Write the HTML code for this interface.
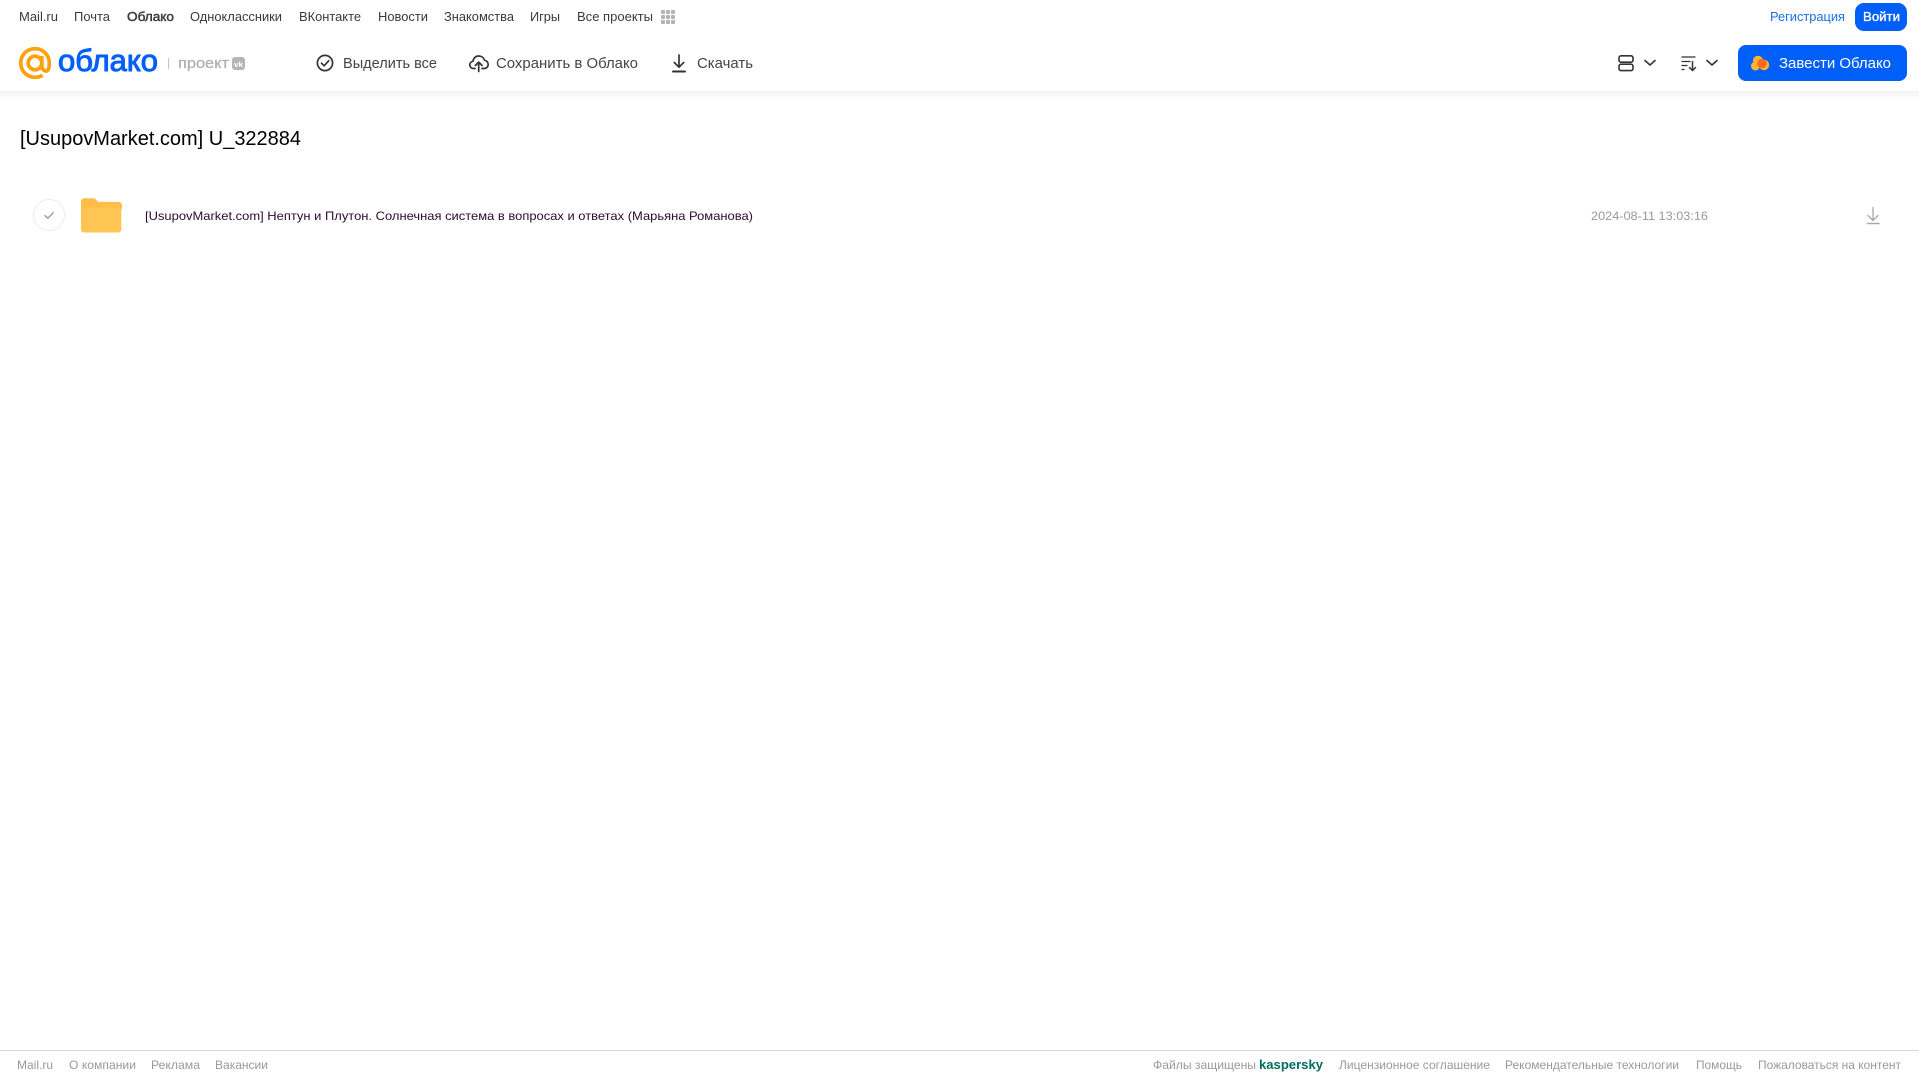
<!DOCTYPE html>
<html lang="ru">
<head>
<meta charset="utf-8">
<title>Облако</title>
<style>
html,body{margin:0;padding:0;background:#fff;width:1919px;height:1079px;overflow:hidden}
svg{display:block;position:absolute;left:0;top:0}
text{font-family:"Liberation Sans",sans-serif;white-space:pre}
.n{font-size:13px;fill:#3a3a3a}
.t{font-size:15px;fill:#444}
.f{font-size:12px;fill:#999}
</style>
</head>
<body>
<svg width="1919" height="1079" viewBox="0 0 1919 1079" xmlns="http://www.w3.org/2000/svg">
<defs>
<linearGradient id="sh" x1="0" y1="0" x2="0" y2="1"><stop offset="0" stop-color="#f2f2f2"/><stop offset="1" stop-color="#fff"/></linearGradient>
</defs>
<rect width="1919" height="1079" fill="#fff"/>
<rect x="0" y="91" width="1919" height="9" fill="url(#sh)"/>

<!-- top nav -->
<text class="n" x="19" y="21" textLength="39" lengthAdjust="spacingAndGlyphs">Mail.ru</text>
<text class="n" x="74" y="21" textLength="36" lengthAdjust="spacingAndGlyphs">Почта</text>
<text class="n" x="127" y="21" textLength="47" lengthAdjust="spacingAndGlyphs" stroke="#3a3a3a" stroke-width=".45">Облако</text>
<text class="n" x="190" y="21" textLength="92" lengthAdjust="spacingAndGlyphs">Одноклассники</text>
<text class="n" x="299" y="21" textLength="62" lengthAdjust="spacingAndGlyphs">ВКонтакте</text>
<text class="n" x="378" y="21" textLength="50" lengthAdjust="spacingAndGlyphs">Новости</text>
<text class="n" x="444" y="21" textLength="70" lengthAdjust="spacingAndGlyphs">Знакомства</text>
<text class="n" x="530" y="21" textLength="30" lengthAdjust="spacingAndGlyphs">Игры</text>
<text class="n" x="577" y="21" textLength="76" lengthAdjust="spacingAndGlyphs">Все проекты</text>
<g fill="#b3b3b3">
<rect x="661" y="10" width="4" height="4" rx="1"/><rect x="666" y="10" width="4" height="4" rx="1"/><rect x="671" y="10" width="4" height="4" rx="1"/>
<rect x="661" y="15" width="4" height="4" rx="1"/><rect x="666" y="15" width="4" height="4" rx="1"/><rect x="671" y="15" width="4" height="4" rx="1"/>
<rect x="661" y="20" width="4" height="4" rx="1"/><rect x="666" y="20" width="4" height="4" rx="1"/><rect x="671" y="20" width="4" height="4" rx="1"/>
</g>

<text x="1770" y="21" font-size="13" fill="#1a6fe8" textLength="75" lengthAdjust="spacingAndGlyphs">Регистрация</text>
<rect x="1855" y="3" width="52" height="28" rx="9" fill="#005ff9"/>
<text x="1863" y="21" font-size="13" fill="#fff" stroke="#fff" stroke-width=".35" textLength="37" lengthAdjust="spacingAndGlyphs">Войти</text>

<!-- logo -->
<g fill="none" stroke="#ffa00f" stroke-width="3.700">
<circle cx="35" cy="63" r="6.800"/>
<path d="M41.800 56v9.500c0 3.600 2 5.500 4.200 5.500 2.600 0 3.300-3.800 3.300-8 0-8-6.400-14.300-14.300-14.300S20.700 55 20.700 63 27.100 77.300 35 77.300c3 0 5.500-.7 7.600-2"/>
</g>
<text x="58" y="71" font-size="31" fill="#005ff9" stroke="#005ff9" stroke-width="1" textLength="100" lengthAdjust="spacingAndGlyphs">облако</text>
<rect x="168" y="58" width="1" height="11" fill="#c4c4c4"/>
<text x="178" y="68" font-size="15" fill="#b0b0b0" stroke="#b0b0b0" stroke-width=".3" textLength="51" lengthAdjust="spacingAndGlyphs">проект</text>
<rect x="232" y="57" width="13" height="13" rx="3" fill="#b5b5b5"/>
<text x="234" y="67" font-size="7.500" font-weight="700" fill="#fff" textLength="9" lengthAdjust="spacingAndGlyphs">vk</text>

<!-- toolbar -->
<g fill="none" stroke="#333" stroke-width="1.700" stroke-linecap="round" stroke-linejoin="round">
<circle cx="325" cy="63" r="7.600"/>
<path d="M321.500 63.200l2.600 2.600 4.600-5"/>
<g transform="translate(1 -3)">
<path d="M474 71.500h-1.500c-2.200 0-3.700-1.600-3.700-3.600 0-1.900 1.400-3.400 3.200-3.600.3-3.200 2.800-5.300 5.800-5.300 2.700 0 5 1.700 5.700 4.200 2.100.3 3.700 2.100 3.700 4.300 0 2.300-1.800 4-4 4H481"/>
<path d="M477.700 74.500v-9M474.300 68.500l3.400-3.400 3.400 3.400"/>
</g>
<path d="M679 55v11.500M674.300 62.500l4.700 4.700 4.700-4.700"/>
<path d="M673 71.500h12" stroke-width="2"/>
</g>
<text class="t" x="343" y="68" textLength="94" lengthAdjust="spacingAndGlyphs">Выделить все</text>
<text class="t" x="496" y="68" textLength="142" lengthAdjust="spacingAndGlyphs">Сохранить в Облако</text>
<text class="t" x="697" y="68" textLength="56" lengthAdjust="spacingAndGlyphs">Скачать</text>

<!-- right toolbar -->
<g fill="none" stroke="#333" stroke-width="1.600" stroke-linecap="round" stroke-linejoin="round">
<rect x="1619" y="55.800" width="14" height="6.400" rx="2"/>
<rect x="1619" y="64.200" width="14" height="6.400" rx="2"/>
<path d="M1645 60.500l5 4.500 5-4.500"/>
<path d="M1707 60.500l5 4.500 5-4.500"/>
</g>
<g fill="none" stroke="#333" stroke-width="1.300" stroke-linecap="round" stroke-linejoin="round">
<path d="M1682 57h13M1682 61.500h8M1682 65.500h5M1682 69.500h2"/>
<path d="M1692.500 61.500v8.500M1689.500 67.500l3 3 3-3" stroke-width="1.500"/>
</g>
<rect x="1738" y="45" width="169" height="36" rx="8" fill="#005ff9"/>
<g fill="#ffb52e">
<circle cx="1755.500" cy="66" r="4.500"/>
<circle cx="1758" cy="60.800" r="5"/>
<circle cx="1764" cy="65" r="5.200"/>
</g>
<circle cx="1762" cy="63.500" r="4.800" fill="#ff6a1f"/>
<text x="1779" y="68" font-size="15" fill="#fff" textLength="112" lengthAdjust="spacingAndGlyphs">Завести Облако</text>

<!-- title -->
<text x="20" y="145" font-size="20" fill="#000" textLength="281" lengthAdjust="spacingAndGlyphs">[UsupovMarket.com] U_322884</text>

<!-- row -->
<circle cx="49" cy="215" r="15.500" fill="#fff" stroke="#ececec" stroke-width="1"/>
<path d="M45 215.500l2.800 2.800 5.400-5.600" fill="none" stroke="#999" stroke-width="1.400" stroke-linecap="round" stroke-linejoin="round"/>
<path d="M81 201.500c0-1.900 1.400-3.300 3.300-3.300h9c1.200 0 2.100.5 2.800 1.400l1.900 2.300h20.700c1.800 0 3.300 1.500 3.300 3.300v4H81z" fill="#ffbe48"/>
<path d="M81 207.500h40.300v21.800c0 1.800-1.500 3.200-3.300 3.200H84.300c-1.900 0-3.300-1.400-3.300-3.200z" fill="#ffc553"/>
<text x="145" y="220" font-size="12" fill="#2c0a2a" textLength="608" lengthAdjust="spacingAndGlyphs">[UsupovMarket.com] Нептун и Плутон. Солнечная система в вопросах и ответах (Марьяна Романова)</text>
<text x="1591" y="220" font-size="12" fill="#999" textLength="117" lengthAdjust="spacingAndGlyphs">2024-08-11 13:03:16</text>
<g fill="none" stroke="#a8a8a8" stroke-width="1.300" stroke-linecap="round" stroke-linejoin="round">
<path d="M1873 207.500v13M1868 215.500l5 5 5-5"/>
<path d="M1867.500 223.500h11.500" stroke-width="1.600"/>
</g>

<!-- footer -->
<rect x="0" y="1050" width="1919" height="1" fill="#d9d9d9"/>
<text class="f" x="17" y="1069" textLength="36" lengthAdjust="spacingAndGlyphs">Mail.ru</text>
<text class="f" x="69" y="1069" textLength="67" lengthAdjust="spacingAndGlyphs">О компании</text>
<text class="f" x="151" y="1069" textLength="49" lengthAdjust="spacingAndGlyphs">Реклама</text>
<text class="f" x="215" y="1069" textLength="53" lengthAdjust="spacingAndGlyphs">Вакансии</text>
<text class="f" x="1153" y="1069" textLength="103" lengthAdjust="spacingAndGlyphs">Файлы защищены</text>
<text x="1259" y="1069" font-size="13" font-weight="700" fill="#006d5c" textLength="64" lengthAdjust="spacingAndGlyphs">kaspersky</text>
<text class="f" x="1339" y="1069" textLength="151" lengthAdjust="spacingAndGlyphs">Лицензионное соглашение</text>
<text class="f" x="1505" y="1069" textLength="174" lengthAdjust="spacingAndGlyphs">Рекомендательные технологии</text>
<text class="f" x="1696" y="1069" textLength="46" lengthAdjust="spacingAndGlyphs">Помощь</text>
<text class="f" x="1758" y="1069" textLength="143" lengthAdjust="spacingAndGlyphs">Пожаловаться на контент</text>
</svg>
</body>
</html>
